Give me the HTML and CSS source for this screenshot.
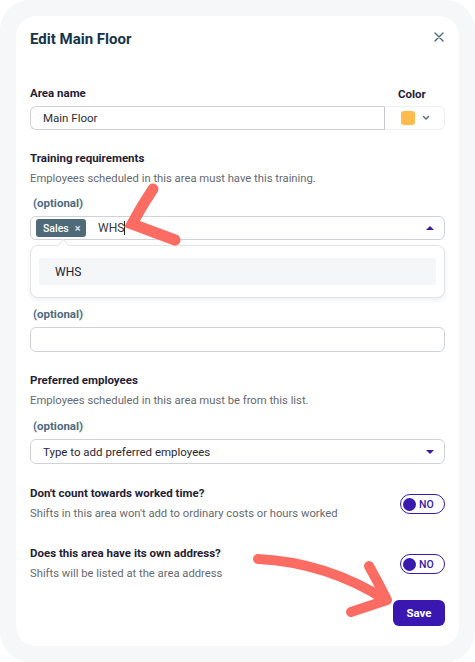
FILE: index.html
```html
<!DOCTYPE html>
<html>
<head>
<meta charset="utf-8">
<link rel="stylesheet" href="styles.css">
</head>
<body>
<div class="frame">
  <div class="card">
    <div class="header">
      <h1 class="title">Edit Main Floor</h1>
      <svg class="close" width="10" height="10" viewBox="0 0 10 10"><path d="M1 1L9 9M9 1L1 9" stroke="#4e6b80" stroke-width="1.4" stroke-linecap="round"/></svg>
    </div>

    <div class="name-row">
      <div class="name-col">
        <div class="label">Area name</div>
        <div class="input name-input">Main Floor</div>
      </div>
      <div class="color-col">
        <div class="label color-label">Color</div>
        <div class="color-picker">
          <span class="swatch"></span>
          <svg class="chev" width="8" height="6" viewBox="0 0 8 6"><path d="M1.5 1.5L4 4L6.5 1.5" fill="none" stroke="#5a6f80" stroke-width="1.5" stroke-linecap="round" stroke-linejoin="round"/></svg>
        </div>
      </div>
    </div>

    <div class="label sec">Training requirements</div>
    <div class="desc">Employees scheduled in this area must have this training.</div>
    <div class="optional">(optional)</div>
    <div class="input select open">
      <span class="chip">Sales <span class="chip-x">×</span></span>
      <span class="typed">WHS</span><span class="cursor"></span>
      <span class="caret up"></span>
    </div>
    <div class="menu">
      <div class="option">WHS</div>
    </div>
    <div class="optional opt2">(optional)</div>
    <div class="input empty"></div>

    <div class="label sec2">Preferred employees</div>
    <div class="desc">Employees scheduled in this area must be from this list.</div>
    <div class="optional opt3">(optional)</div>
    <div class="input select">
      <span class="placeholder">Type to add preferred employees</span>
      <span class="caret down"></span>
    </div>

    <div class="toggle-row first">
      <div class="toggle-text">
        <div class="label">Don't count towards worked time?</div>
        <div class="desc">Shifts in this area won't add to ordinary costs or hours worked</div>
      </div>
      <div class="toggle"><span class="dot"></span><span class="no">NO</span></div>
    </div>

    <div class="toggle-row second">
      <div class="toggle-text">
        <div class="label">Does this area have its own address?</div>
        <div class="desc">Shifts will be listed at the area address</div>
      </div>
      <div class="toggle"><span class="dot"></span><span class="no">NO</span></div>
    </div>

    <div class="actions">
      <button class="save">Save</button>
    </div>
  </div>

  <svg class="annot" width="475" height="662" viewBox="0 0 475 662">
    <path d="M153 189 Q141 207 132 224 L175 240" fill="none" stroke="#fd6c62" stroke-width="11" stroke-linecap="round" stroke-linejoin="miter"/>
    <path d="M258 559 C300 561 345 574 386 600" fill="none" stroke="#fd6c62" stroke-width="10" stroke-linecap="round"/>
    <path d="M369 566 Q379 584 387 600 L351 612" fill="none" stroke="#fd6c62" stroke-width="10" stroke-linecap="round" stroke-linejoin="round"/>
  </svg>
</div>
</body>
</html>
```

FILE: styles.css
```css
* { box-sizing: border-box; }
html, body { margin: 0; padding: 0; background: #ffffff; }
body { font-family: Roboto, "Noto Sans", "Liberation Sans", sans-serif; }

.frame {
  position: relative;
  width: 475px;
  height: 662px;
  background: #f6f7f9;
  border-radius: 30px;
  padding: 16px;
}

.card {
  width: 443px;
  height: 630px;
  background: #ffffff;
  border-radius: 20px;
  padding: 13px 14px 21px 14px;
}

.header {
  display: flex;
  justify-content: space-between;
  align-items: center;
  height: 20px;
}
.title {
  margin: 0;
  font-size: 15px;
  line-height: 20px;
  font-weight: 700;
  color: #163447;
}
.close { margin-right: 1px; margin-top: -4px; }

.label {
  font-size: 11.5px;
  line-height: 16px;
  font-weight: 700;
  color: #1f1d35;
}
.desc {
  font-size: 11.25px;
  line-height: 16px;
  color: #676a72;
  margin-top: 5px;
}
.optional {
  font-size: 11.5px;
  line-height: 16px;
  font-weight: 700;
  color: #4d6b80;
  margin-top: 8px;
  padding-left: 3px;
}

.name-row {
  display: flex;
  margin-top: 36px;
}
.name-col { flex: 1; }
.color-col { width: 60px; }
.color-label { padding-left: 13px; margin-top: 1px; margin-bottom: -1px; }

.input {
  margin-top: 5px;
  height: 24px;
  border: 1px solid #cfd3d8;
  border-radius: 6px;
  font-size: 11.5px;
  color: #2e2e38;
  display: flex;
  align-items: center;
  padding-left: 12px;
}
.name-input {
  border-radius: 6px 0 0 6px;
  border-right-color: #c6c9cd;
}
.color-picker {
  margin-top: 5px;
  height: 24px;
  border: 1px solid #eef0f2;
  border-left: none;
  border-radius: 0 6px 6px 0;
  display: flex;
  align-items: center;
  padding-left: 16px;
  gap: 7px;
}
.swatch {
  width: 14px;
  height: 14px;
  border-radius: 3px;
  background: #ffbb4d;
}

.sec { margin-top: 20px; }
.sec2 { margin-top: 20px; }
.opt2 { margin-top: 8px; }
.opt3 { margin-top: 9px; }

.select { position: relative; padding-left: 5px; }
.select.open { margin-top: 5px; }
.chip {
  display: inline-flex;
  align-items: center;
  height: 18px;
  width: 50px;
  padding-left: 7px;
  background: #4f6a79;
  color: #ffffff;
  border-radius: 3px;
  font-size: 10.5px;
  font-weight: 500;
}
.chip-x { margin-left: 6px; font-size: 11px; color: #dfe6ea; }
.typed { margin-left: 12px; color: #3a3a42; font-size: 12px; }
.cursor {
  display: inline-block;
  width: 1px;
  height: 14px;
  background: #222;
}
.caret {
  position: absolute;
  right: 10px;
  top: 9px;
  width: 0;
  height: 0;
  border-left: 4px solid transparent;
  border-right: 4px solid transparent;
}
.caret.up { border-bottom: 4px solid #3a1aae; }
.caret.down { border-top: 4px solid #3a1aae; top: 10px; }

.menu {
  position: relative;
  margin-top: 5px;
  height: 53px;
  border: 1px solid #e2e5e8;
  border-radius: 8px;
  background: #fff;
  box-shadow: 0 2px 5px rgba(30, 40, 60, 0.08);
  padding: 12px 8px;
}
.menu::before {
  content: "";
  position: absolute;
  top: -5px;
  left: 28px;
  width: 8px;
  height: 8px;
  background: #fff;
  border-left: 1px solid #e2e5e8;
  border-top: 1px solid #e2e5e8;
  transform: rotate(45deg);
}
.option {
  height: 27px;
  background: #f5f6f8;
  display: flex;
  align-items: center;
  padding-left: 16px;
  font-size: 12px;
  color: #1f1d35;
}

.empty { height: 25px; }
.select:not(.open) { height: 25px; padding-left: 12px; margin-top: 5px; }
.placeholder { color: #2a2a34; }

.toggle-row {
  display: flex;
  justify-content: space-between;
  align-items: center;
}
.toggle-row.first { margin-top: 21px; }
.toggle-row.second { margin-top: 23px; }
.toggle {
  margin-top: 1px;
  width: 45px;
  height: 20px;
  border: 1.5px solid #3a1aae;
  border-radius: 10px;
  display: flex;
  align-items: center;
  padding-left: 2px;
  gap: 3px;
}
.dot {
  width: 13px;
  height: 13px;
  border-radius: 50%;
  background: #3a1aae;
}
.no {
  font-size: 10.5px;
  font-weight: 500;
  color: #3a1aae;
}

.actions {
  display: flex;
  justify-content: flex-end;
  margin-top: 18px;
}
.save {
  width: 52px;
  height: 26px;
  border: none;
  border-radius: 6px;
  background: #3a17b0;
  color: #fff;
  font-family: inherit;
  font-size: 11.5px;
  font-weight: 700;
  padding: 0;
}

.annot {
  position: absolute;
  left: 0;
  top: 0;
  pointer-events: none;
}
```
